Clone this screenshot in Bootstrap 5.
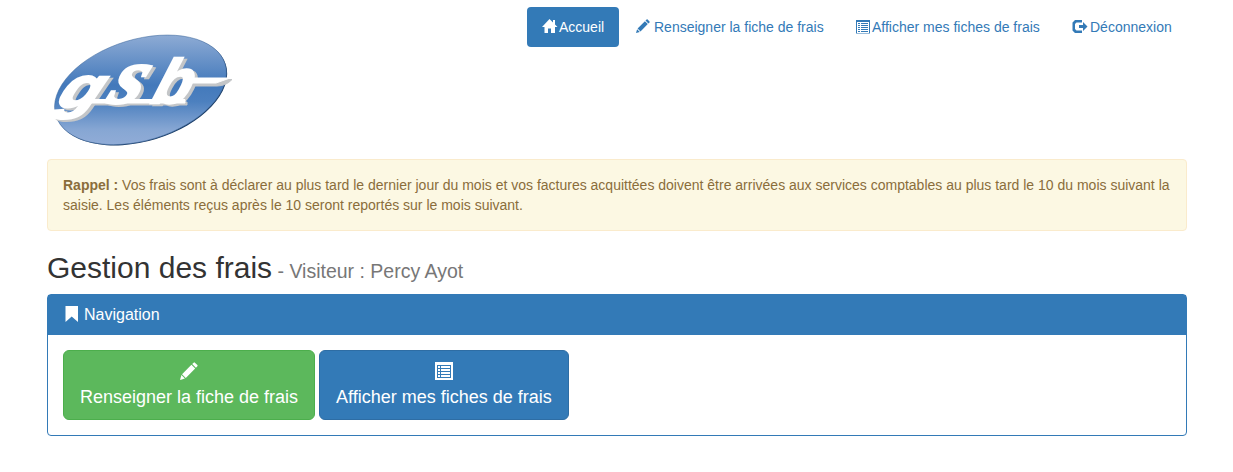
<!DOCTYPE html>
<html lang="fr">
<head>
<meta charset="utf-8">
<meta name="viewport" content="width=device-width, initial-scale=1">
<title>Gestion des frais</title>
<link href="https://cdn.jsdelivr.net/npm/bootstrap@5.3.0/dist/css/bootstrap.min.css" rel="stylesheet">
<style>
:root{--brand:#337ab7}
body{font-family:"Liberation Sans",Arial,sans-serif;font-size:14px;line-height:20px;color:#333;background:#fff}
.page{width:1140px;margin-left:47px}
.page svg{flex:none}
.top-row{height:159px}
.logo-link{margin:27px 0 0 3px}
.nav-pills{--bs-nav-link-padding-x:15px;--bs-nav-link-padding-y:10px;--bs-nav-link-color:#337ab7;--bs-nav-link-hover-color:#23527c;--bs-nav-pills-border-radius:4px;--bs-nav-pills-link-active-bg:#337ab7;margin-top:7px;gap:2px}
.nav-pills .nav-link{font-size:14px;line-height:20px;white-space:nowrap}
.pill-home{width:92px}
.pill-edit{width:218px}
.pill-list{width:214px}
.pill-exit{width:130px}
.reminder{color:#8a6d3b;background:#fcf8e3;border:1px solid #faebcc;border-radius:4px;padding:15px;height:72px}
.page-title{font-size:30px;line-height:33px;font-weight:400;color:#333;margin:20px 0 10px}
.page-title small{font-size:19.5px;line-height:1;color:#777;font-weight:400}
.panel{border:1px solid var(--brand);border-radius:4px;height:142px}
.panel .card-header{background:var(--brand);color:#fff;border:0;border-radius:0;height:40px;padding:0 15px 0 17px;font-size:16px}
.panel .card-body{padding:15px;gap:4px}
.tile{height:70px;border-radius:6px;font-size:18px;line-height:24px;color:#fff!important;padding:10px 0;gap:4px}
.tile-green{width:252px;background:#5cb85c;border-color:#4cae4c}
.tile-blue{width:250px;background:#337ab7;border-color:#2e6da4}
.script-word{font-family:"Liberation Sans",Arial,sans-serif;font-weight:700;font-style:italic}
.script-word .letter-s{font-family:"Liberation Serif",serif}
</style>
</head>
<body>
<svg class="d-none" aria-hidden="true">
  <symbol id="pencil" viewBox="0 0 14 14"><path d="M10.600.5q.5-.5 1 0l1.900 1.900q.5.5 0 1L12.400 4.500 9.500 1.600ZM8.900 2.200l2.900 2.900-7.300 7.300L1.600 9.500ZM1.100 10.200l2.700 2.700L0 14Z"/></symbol>
  <symbol id="listing" viewBox="0 0 18 18"><path fill-rule="evenodd" d="M0 0h18v18H0ZM2 3v13h14V3ZM3 4h2v2H3ZM6 4h9v2H6ZM3 7h2v2H3ZM6 7h9v2H6ZM3 10h2v2H3ZM6 10h9v2H6ZM3 13h2v2H3ZM6 13h9v2H6Z"/></symbol>
  <symbol id="listing-small" viewBox="0 0 14 14"><path fill-rule="evenodd" d="M0 0h14v14H0ZM1 2v11h12V2ZM2 3h2v1H2ZM5 3h7v1H5ZM2 5h2v1H2ZM5 5h7v1H5ZM2 7h2v1H2ZM5 7h7v1H5ZM2 9h2v1H2ZM5 9h7v1H5ZM2 11h2v1H2ZM5 11h7v1H5Z"/></symbol>
</svg>
<div class="page">
  <header class="top-row d-flex justify-content-between align-items-start">
    <a class="logo-link" href="#" aria-label="gsb">
      <svg class="d-block" width="190" height="125" viewBox="50 27 190 125">
        <defs>
          <linearGradient id="shade" x1="140" y1="35" x2="140" y2="146" gradientUnits="userSpaceOnUse" gradientTransform="rotate(17 140 90)"><stop offset="0" stop-color="#8eabd4"/><stop offset=".45" stop-color="#4379bb"/><stop offset=".6" stop-color="#4c80bf"/><stop offset=".85" stop-color="#86a6d3"/><stop offset="1" stop-color="#92add7"/></linearGradient>
        </defs>
        <g transform="rotate(-17 140 90)"><ellipse cx="141" cy="91" rx="88.500" ry="50.500" fill="#173963"/><ellipse cx="140.500" cy="90" rx="88.500" ry="50.500" fill="url(#shade)" stroke="#416b9f" stroke-width=".5"/></g>
        <g class="script-word" fill="#c4c6c8" stroke="#c4c6c8" stroke-width="2.500">
          <path d="M86 102H187V105H82ZM190 79.500H232Q226 86 217 86H190Z" stroke-width="1"/>
          <text transform="translate(58 109) skewX(-24) scale(1.180 1)" font-size="57">g</text>
          <text class="letter-s" transform="translate(108 105) skewX(-24) scale(1.050 1)" font-size="80">s</text>
          <text transform="translate(153 105) skewX(-18) scale(.98 1)" font-size="62">b</text>
        </g>
        <g class="script-word" fill="#fff" stroke="#fff" stroke-width="2.500" aria-hidden="true">
          <path d="M84 99.500H185V103H80ZM188 78H230L216 83H188Z" stroke-width="1"/>
          <text transform="translate(55 107) skewX(-24) scale(1.180 1)" font-size="57">g</text>
          <text class="letter-s" transform="translate(105 103) skewX(-24) scale(1.050 1)" font-size="80">s</text>
          <text transform="translate(150 103) skewX(-18) scale(.98 1)" font-size="62">b</text>
        </g>
      </svg>
    </a>
    <ul class="nav nav-pills flex-nowrap">
      <li class="nav-item"><a class="nav-link pill-home active d-flex align-items-center" href="#"><svg width="17" height="16" viewBox="0 0 17 16" fill="currentColor"><path d="M7.500 0 11 3.500V1h2v4.500L15.500 8H13v6H9V9.500H6V14H2.500V8H0Z"/></svg>Accueil</a></li>
      <li class="nav-item"><a class="nav-link pill-edit d-flex align-items-center" href="#"><svg class="me-1" width="14" height="16" viewBox="0 0 14 16" fill="currentColor"><use href="#pencil" width="14" height="14"/></svg>Renseigner la fiche de frais</a></li>
      <li class="nav-item"><a class="nav-link pill-list d-flex align-items-center" href="#"><svg width="16" height="16" viewBox="0 -.5 16 16" fill="currentColor" shape-rendering="crispEdges"><use href="#listing-small" width="14" height="14"/></svg>Afficher mes fiches de frais</a></li>
      <li class="nav-item"><a class="nav-link pill-exit d-flex align-items-center" href="#"><svg width="18" height="16" viewBox="0 0 18 16" fill="currentColor"><path d="M3 1h7v2.500H4.500L3 5v5l1.500 1.500H10V14H3L.500 11.500v-8Z"/><path d="M7 6h4V3l4.500 4.500L11 12V9H7Z"/></svg>Déconnexion</a></li>
    </ul>
  </header>
  <div class="reminder" role="alert"><strong>Rappel :</strong> Vos frais sont à déclarer au plus tard le dernier jour du mois et vos factures acquittées doivent être arrivées aux services comptables au plus tard le 10 du mois suivant la saisie. Les éléments reçus après le 10 seront reportés sur le mois suivant.</div>
  <h2 class="page-title">Gestion des frais<small> - Visiteur : Percy Ayot</small></h2>
  <section class="card panel">
    <h3 class="card-header d-flex align-items-center mb-0 fw-normal"><svg width="19" height="18" viewBox="0 0 19 18" fill="currentColor"><path d="M.5 0H13v16L6.700 10.500.5 16Z"/></svg>Navigation</h3>
    <div class="card-body d-flex">
      <a class="btn tile tile-green d-flex flex-column align-items-center" href="#"><svg width="18" height="20" viewBox="0 -1 18 20" fill="currentColor"><use href="#pencil" width="18" height="18"/></svg><span>Renseigner la fiche de frais</span></a>
      <a class="btn tile tile-blue d-flex flex-column align-items-center" href="#"><svg width="18" height="20" viewBox="0 -1 18 20" fill="currentColor"><use href="#listing" width="18" height="18"/></svg><span>Afficher mes fiches de frais</span></a>
    </div>
  </section>
</div>
<script src="https://cdn.jsdelivr.net/npm/bootstrap@5.3.0/dist/js/bootstrap.bundle.min.js"></script>
</body>
</html>
